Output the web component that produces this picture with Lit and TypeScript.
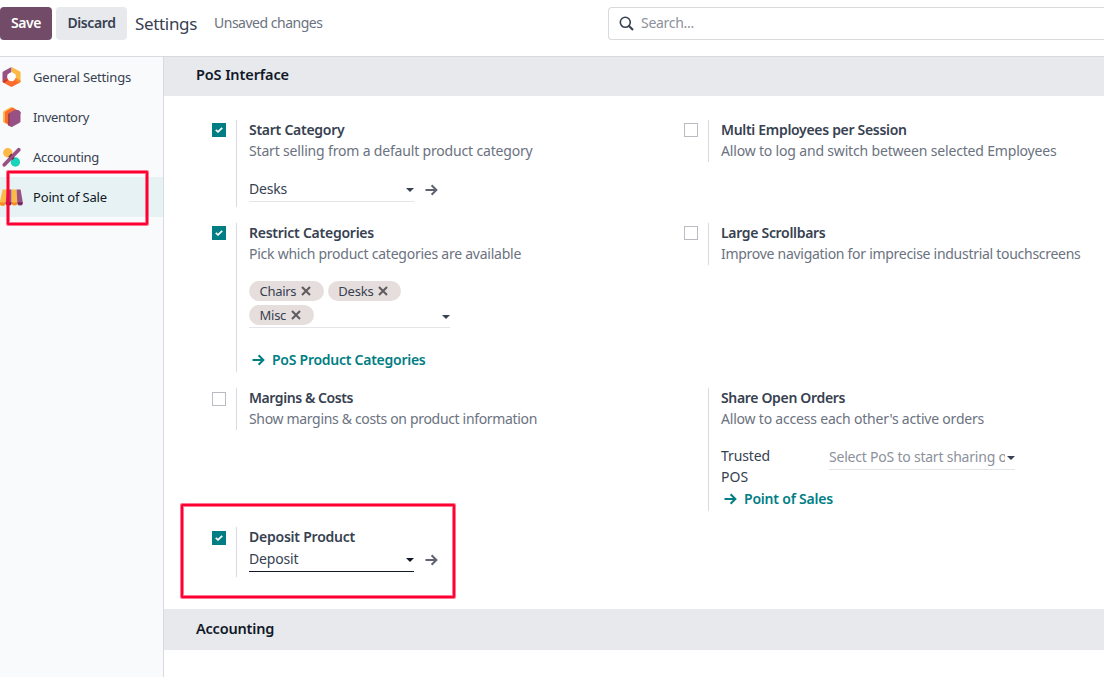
import { LitElement, html, css, nothing, TemplateResult } from "lit";
import { customElement, property, state } from "lit/decorators.js";
import { classMap } from "lit/directives/class-map.js";

const t = (label: string, tracking = 0) =>
  html`<span style="letter-spacing:${tracking}px">${label}</span>`;

const arrow = html`<svg class="arrow" width="13" height="12" viewBox="0 0 13 12" fill="none" stroke="currentColor" stroke-width="2">
  <path d="M0.5 6H11M6.6 1.2L11.4 6L6.6 10.8" />
</svg>`;
const caret = html`<svg class="caret" width="8" height="4" viewBox="0 0 8 4"><path d="M0 0H8L4 4Z" fill="currentColor" /></svg>`;
const cross = html`<svg width="10" height="10" viewBox="0 0 10 10" stroke="#5f5c60" stroke-width="2.1"><path d="M1 1L9 9M9 1L1 9" /></svg>`;

const appIcons: Record<string, TemplateResult> = {
  general: html`<svg width="24" height="24" viewBox="0 0 24 24">
    <path d="M11.5 2L3.6 6.2Q2.5 6.9 2.5 8V16L7.5 14.5V9.5L11.5 7Z" fill="#985184" />
    <path d="M11.5 2L19.6 6.2Q20.6 6.9 20.6 8V16L15.6 14.5V9.5L11.5 7Z" fill="#fbb945" />
    <path d="M2.5 16Q2.5 17 3.6 17.7L10.4 21.5Q11.5 22 12.6 21.5L19.6 17.7Q20.6 17 20.6 16L15.8 13H7.3Z" fill="#fc6b2d" />
    <path d="M2.5 16L7.5 13.2V15.8L4 18Q2.5 17.2 2.5 16Z" fill="#c43a35" />
    <path d="M20.6 16L15.6 13.2V15.8L19 18Q20.6 17.2 20.6 16Z" fill="#f98b25" />
    <circle cx="11.5" cy="12" r="4.2" fill="#fff" />
  </svg>`,
  inventory: html`<svg width="24" height="24" viewBox="0 0 24 24">
    <path d="M11 2L3.8 6.1Q3 6.7 3 7.6V16.2Q3 17 3.8 17.5L6 18.8L14 3.6Z" fill="#fbb945" />
    <path d="M12.5 2.5L6 6.3Q5 7 5 8V17.2L8.5 20.2L18 5.4Z" fill="#fc6b2d" />
    <path d="M8 8.8L14.5 5L20.5 7V16.3Q20.5 17.2 19.6 17.7L12.4 21.8Q11.6 22.2 10.8 21.7L8 20Z" fill="#985184" />
    <path d="M8 9.5L10 8V21.2L8 20Z" fill="#a3404f" />
    <path d="M14.5 5L18.4 5Q20.5 6.2 20.5 7.2V9Z" fill="#985184" />
  </svg>`,
  accounting: html`<svg width="24" height="24" viewBox="0 0 24 24">
    <circle cx="7.8" cy="7.8" r="4.7" fill="#fbb945" />
    <circle cx="15.4" cy="17" r="4.7" fill="#1ad3bb" />
    <path d="M4.3 19.8L18.8 4.8" stroke="#985184" stroke-width="3.8" stroke-linecap="round" />
    <path d="M8.8 12.2L11.8 9.1M12 14.3L14.2 12.5" stroke="#6b3548" stroke-width="1.6" />
  </svg>`,
  pos: html`<svg width="24" height="24" viewBox="0 0 24 24">
    <path d="M2.6 4.5H7L5.6 18.4A2.8 2.6 0 0 1 -0.4 18Z" fill="#fbb945" />
    <path d="M7 4.5H11.6V18A3 2.6 0 0 1 5.6 18Z" fill="#985184" />
    <path d="M11.6 4.5H16.6L17.4 18A2.9 2.6 0 0 1 11.6 18Z" fill="#fbb945" />
    <path d="M16.6 4.5H20.6L22.9 18A2.8 2.6 0 0 1 17.3 18Z" fill="#985184" />
    <path d="M-0.4 17.5H5.6A2.8 2.8 0 0 1 -0.4 17.5ZM11.6 17.5H17.4A2.9 2.8 0 0 1 11.6 17.5Z" fill="#fc8622" />
    <path d="M5.6 17.5H11.6A3 2.8 0 0 1 5.6 17.5ZM17.3 17.5H22.8A2.8 2.8 0 0 1 17.3 17.5Z" fill="#6b1f55" />
  </svg>`,
};

const base = css`
  :host { display: block; box-sizing: border-box; }
  * { box-sizing: border-box; }
  svg { display: block; flex: none; }
`;

@customElement("control-bar")
class ControlBar extends LitElement {
  static styles = [base, css`
    .bar { display: flex; height: 57px; padding-top: 7px; border-bottom: 1px solid #d8dadd; background: #fff; }
    .btn { font: inherit; font-weight: 600; line-height: 31px; height: 33px; border: 0; padding: 0 0 2px; text-align: center; border-radius: 4px; background: #e7e9ed; color: #374151; width: 71px; margin-right: 8px; }
    .save { background: #714b67; color: #fff; width: 52px; margin-right: 4px; }
    .title { font-size: 17px; line-height: 33px; color: #374151; width: 79px; }
    .status { line-height: 31px; color: #6b7280; width: 394px; }
    .search { flex: 1; height: 33px; border: 1px solid #d8dadd; border-right: 0; border-radius: 4px 0 0 4px; display: flex; align-items: center; color: #8c919b; padding: 0 0 2px 10px; gap: 7px; }
    .search svg { margin-top: 2px; }
  `];
  render() {
    return html`<div class="bar">
      <button class="btn save">${t("Save", -0.42)}</button>
      <button class="btn">${t("Discard", -0.41)}</button>
      <div class="title">${t("Settings", -0.33)}</div>
      <div class="status">${t("Unsaved changes", -0.49)}</div>
      <div class="search">
        <svg width="15" height="15" viewBox="0 0 15 15" fill="none" stroke="#374151"><circle cx="6.3" cy="6.3" r="5" stroke-width="1.6" /><path d="M9.8 9.8L14 14" stroke-width="2.1" /></svg>
        ${t("Search...", -0.29)}
      </div>
    </div>`;
  }
}

@customElement("app-tabs")
class AppTabs extends LitElement {
  @state() selected = "pos";
  private tabs: [string, string, number][] = [
    ["general", "General Settings", -0.17],
    ["inventory", "Inventory", -0.33],
    ["accounting", "Accounting", -0.28],
    ["pos", "Point of Sale", -0.16],
  ];
  static styles = [base, css`
    :host { width: 164px; flex: none; background: #f9fafc; border-right: 1px solid #d8dadd; font-size: 13px; color: #374151; }
    .tab { display: flex; align-items: center; height: 40px; gap: 9px; }
    .active { background: #e6f2f3; color: #111827; }
  `];
  render() {
    return this.tabs.map(([id, label, ls]) => html`
      <div class=${classMap({ tab: true, active: id === this.selected })} @click=${() => (this.selected = id)}>
        ${appIcons[id]}${t(label, ls)}
      </div>`);
  }
}

@customElement("setting-box")
class SettingBox extends LitElement {
  @property({ type: Boolean }) checked = false;
  @property({ type: Boolean }) plain = false;
  @property({ type: Boolean }) low = false;
  @property({ attribute: false }) heading: [string, number] = ["", 0];
  @property({ attribute: false }) desc?: [string, number];
  static styles = [base, css`
    :host { display: flex; align-items: flex-start; line-height: 21px; }
    .side { width: 24px; flex: none; padding-top: 3px; }
    .low { padding-top: 4px; }
    .box { width: 14px; height: 14px; border: 1px solid #b9bcc2; background: #fff; display: grid; place-items: center; }
    .on { background: #017e84; border-color: #017e84; }
    .body { flex: 1; align-self: stretch; min-width: 0; border-left: 1px solid #d8dadd; padding-left: 12px; }
    .head { height: 21px; line-height: 20px; font-weight: 600; color: #374151; white-space: nowrap; }
    .desc { height: 21px; line-height: 20px; color: #6b7280; white-space: nowrap; }
  `];
  render() {
    return html`
      <div class=${classMap({ side: true, low: this.low })}>
        ${this.plain ? nothing : html`<div class=${classMap({ box: true, on: this.checked })}>
          ${this.checked ? html`<svg width="8" height="6" viewBox="0 0 8 6" fill="none" stroke="#fff" stroke-width="1.8"><path d="M0.8 2.8L3 4.8L7.2 0.8" /></svg>` : nothing}
        </div>`}
      </div>
      <div class="body">
        <div class="head">${t(...this.heading)}</div>
        ${this.desc ? html`<div class="desc">${t(...this.desc)}</div>` : nothing}
        <slot></slot>
      </div>`;
  }
}

@customElement("app-root")
class AppRoot extends LitElement {
  static styles = [base, css`
    :host { display: flex; flex-direction: column; height: 677px; overflow: hidden; position: relative; background: #fff; font: 14px/21px "Noto Sans", "Open Sans", sans-serif; color: #374151; }
    .main { display: flex; flex: 1; min-height: 0; }
    .content { flex: 1; min-width: 0; }
    .section { height: 41px; line-height: 39px; padding-left: 32px; background: #e7e9ed; color: #111827; font-size: 14.5px; font-weight: 600; }
    .first { height: 39px; line-height: 35px; }
    .grid { display: grid; grid-template-columns: 472px 1fr; row-gap: 16px; padding: 24px 0 32px 48px; align-items: start; }
    .field { display: flex; align-items: center; }
    .input { display: flex; align-items: center; justify-content: space-between; width: 165px; height: 25px; padding-bottom: 1px; border-bottom: 1px solid #e3e5e9; }
    .caret { margin-top: 2px; }
    .go { margin: 1px 0 0 11px; color: #5f636f; }
    .start { padding: 15px 0 5px; }
    .focus { height: 24px; padding-bottom: 3px; border-color: #111827; }
    .focus .caret { color: #111827; margin-top: 3px; }
    .deposit { padding-bottom: 5px; }
    .deposit .go { margin-top: -1px; }
    .tags { display: flex; flex-wrap: wrap; gap: 4px; width: 201px; margin-top: 16px; height: 47px; border-bottom: 1px solid #e3e5e9; align-content: flex-start; }
    .tag { display: flex; align-items: center; height: 20px; padding: 0 12.5px 0 10.5px; gap: 5px; border-radius: 10px; background: #e6dedd; font-size: 13px; line-height: 18px; color: #374151; }
    .tags .caret { margin: 10px 0 0 auto; }
    .link { display: flex; align-items: center; gap: 7px; padding-left: 3px; font-weight: 600; color: #017e84; line-height: 20px; height: 21px; }
    .catlink { margin: 21px 0 2px; }
    .trusted { display: flex; padding-top: 15px; height: 57px; }
    .label { width: 108px; }
    .select { width: 186px; padding: 0 0 2px; color: #8c919b; }
    .clip { width: 176px; overflow: hidden; white-space: nowrap; }
    .select .caret { color: #374151; margin-top: 4px; }
    .poslink { height: 24px; }
    .mark { position: absolute; border: 2px solid #ff0033; border-radius: 1px; box-shadow: 0 0 0 1px #ff003388, inset 0 0 0 1px #ff003388; pointer-events: none; }
    .mark-tab { left: 7px; top: 171px; width: 141px; height: 54px; }
    .mark-deposit { left: 181px; top: 504px; width: 274px; height: 94px; }
  `];
  render() {
    return html`
      <control-bar></control-bar>
      <div class="main">
        <app-tabs></app-tabs>
        <div class="content">
          <div class="section first">${t("PoS Interface", -0.12)}</div>
          <div class="grid">
            <setting-box checked .heading=${["Start Category", -0.26]} .desc=${["Start selling from a default product category", -0.173]}>
              <div class="field start"><div class="input">${t("Desks", -0.2)}${caret}</div><span class="go">${arrow}</span></div>
            </setting-box>
            <setting-box .heading=${["Multi Employees per Session", -0.31]} .desc=${["Allow to log and switch between selected Employees", -0.174]}></setting-box>
            <setting-box checked .heading=${["Restrict Categories", -0.25]} .desc=${["Pick which product categories are available", -0.246]}>
              <div class="tags">
                <span class="tag">${t("Chairs", -0.3)}${cross}</span>
                <span class="tag">${t("Desks", -0.2)}${cross}</span>
                <span class="tag">${t("Misc", -0.25)}${cross}</span>
                ${caret}
              </div>
              <div class="link catlink">${arrow}${t("PoS Product Categories", -0.26)}</div>
            </setting-box>
            <setting-box .heading=${["Large Scrollbars", -0.31]} .desc=${["Improve navigation for imprecise industrial touchscreens", -0.282]}></setting-box>
            <setting-box low .heading=${["Margins & Costs", -0.43]} .desc=${["Show margins & costs on product information", -0.33]}></setting-box>
            <setting-box plain .heading=${["Share Open Orders", -0.335]} .desc=${["Allow to access each other's active orders", -0.2]}>
              <div class="trusted">
                <div class="label"><div>${t("Trusted", -0.11)}</div><div>${t("POS")}</div></div>
                <div class="input select"><div class="clip">${t("Select PoS to start sharing orders", -0.217)}</div>${caret}</div>
              </div>
              <div class="link poslink">${arrow}${t("Point of Sales", -0.21)}</div>
            </setting-box>
            <setting-box checked low .heading=${["Deposit Product", -0.23]}>
              <div class="field deposit"><div class="input focus">${t("Deposit", -0.16)}${caret}</div><span class="go">${arrow}</span></div>
            </setting-box>
          </div>
          <div class="section">${t("Accounting", -0.2)}</div>
        </div>
      </div>
      <div class="mark mark-tab"></div>
      <div class="mark mark-deposit"></div>`;
  }
}
